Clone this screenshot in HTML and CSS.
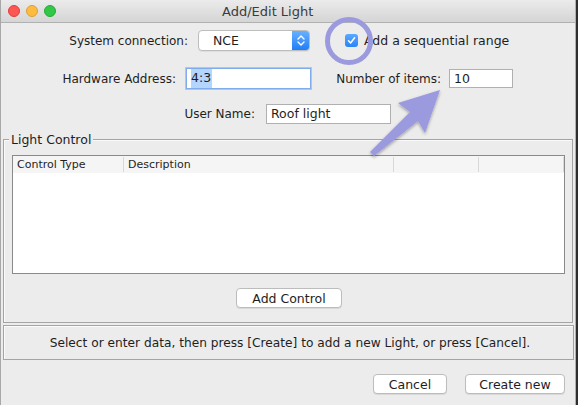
FILE: index.html
```html
<!DOCTYPE html>
<html>
<head>
<meta charset="utf-8">
<title>Add/Edit Light</title>
<link rel="stylesheet" href="styles.css">
</head>
<body>
<div class="window">
  <div class="titlebar">
    <div class="lights">
      <span class="dot red"></span><span class="dot yellow"></span><span class="dot green"></span>
    </div>
    <div class="title">Add/Edit Light</div>
  </div>
  <div class="content">
    <div class="row row1">
      <label class="lbl lbl-sys">System connection:</label>
      <div class="combo">
        <span class="combo-text">NCE</span>
        <span class="combo-btn">
          <svg width="18" height="21" viewBox="0 0 18 21"><path d="M6 9 L9 6 L12 9 M6 12 L9 15 L12 12" fill="none" stroke="#fff" stroke-width="1.4" stroke-linecap="round" stroke-linejoin="round"/></svg>
        </span>
      </div>
      <span class="check">
        <svg width="13" height="13" viewBox="0 0 13 13"><path d="M3.5 6.8 L5.6 9 L9.6 3.8" fill="none" stroke="#fff" stroke-width="1.5" stroke-linecap="round" stroke-linejoin="round"/></svg>
      </span>
      <span class="check-label">Add a sequential range</span>
    </div>
    <div class="row row2">
      <label class="lbl lbl-hw">Hardware Address:</label>
      <div class="field field-hw focused"><span class="sel">4:3</span></div>
      <label class="lbl lbl-num">Number of items:</label>
      <div class="field field-num">10</div>
    </div>
    <div class="row row3">
      <label class="lbl lbl-user">User Name:</label>
      <div class="field field-user">Roof light</div>
    </div>
    <div class="group">
      <div class="group-title">Light Control</div>
      <div class="table">
        <div class="thead">
          <div class="th th1">Control Type</div>
          <div class="th th2">Description</div>
          <div class="th th3"></div>
          <div class="th th4"></div>
        </div>
      </div>
      <div class="group-actions">
        <button class="btn btn-add">Add Control</button>
      </div>
    </div>
    <div class="message">Select or enter data, then press [Create] to add a new Light, or press [Cancel].</div>
    <div class="footer">
      <button class="btn btn-cancel">Cancel</button>
      <button class="btn btn-create">Create new</button>
    </div>
  </div>
  <svg class="overlay" width="578" height="405" viewBox="0 0 578 405">
    <defs>
      <filter id="sh" x="-20%" y="-20%" width="140%" height="140%">
        <feDropShadow dx="0" dy="1.5" stdDeviation="1.5" flood-color="#000" flood-opacity="0.35"/>
      </filter>
    </defs>
    <circle cx="349" cy="41" r="21.5" fill="none" stroke="#9c9ade" stroke-width="5"/>
    <polygon filter="url(#sh)" fill="#9c9ade" points="440,90 398,103 410,112 370,152 374,156 418,121 425,133"/>
  </svg>
</div>
</body>
</html>
```
FILE: styles.css
```css
* { box-sizing: border-box; }
html, body { margin: 0; padding: 0; }
body {
  background: #2e2e2e;
  width: 578px;
  height: 405px;
  overflow: hidden;
  font-family: "DejaVu Sans", "Liberation Sans", sans-serif;
  font-size: 12px;
  color: #1e1e1e;
}
.window {
  position: relative;
  width: 576px;
  height: 405px;
  background: #ececec;
  border-left: 1px solid #a8a8a8;
  border-right: 1px solid #b0b0b0;
  display: flex;
  flex-direction: column;
}
.titlebar {
  height: 23px;
  flex: none;
  display: flex;
  align-items: center;
  background: linear-gradient(#ebebeb, #d5d5d5);
  border-bottom: 1px solid #b1b1b1;
}
.lights { display: flex; gap: 6px; padding-left: 7px; }
.dot { width: 12px; height: 12px; border-radius: 50%; display: block; }
.red { background: #fc5753; border: 1px solid #df3e3a; }
.yellow { background: #fdbc40; border: 1px solid #de9f34; }
.green { background: #33c748; border: 1px solid #27aa35; }
.title {
  margin-left: 166px;
  font-size: 13px;
  color: #3b3b3b;
  padding-top: 1px;
}
.content { flex: 1; display: flex; flex-direction: column; }
.row { display: flex; align-items: center; }
.lbl { text-align: right; white-space: nowrap; flex: none; }
.row1 { margin-top: 7px; height: 21px; }
.lbl-sys { width: 187px; margin-right: 10px; }
.combo {
  width: 112px; height: 21px;
  display: flex;
  background: #fff;
  border: 1px solid #bdbdbd;
  border-radius: 4px;
  box-shadow: 0 1px 0 rgba(0,0,0,0.06);
  overflow: hidden;
}
.combo-text { flex: 1; padding-left: 14px; line-height: 19px; font-size: 12.5px; }
.combo-btn {
  width: 18px;
  background: linear-gradient(#6cb3ff, #1c7cf6);
  display: flex; align-items: center; justify-content: center;
  margin: -1px -1px -1px 0;
}
.check {
  width: 13px; height: 13px;
  margin-left: 35px;
  border-radius: 3px;
  background: linear-gradient(#5aa8ff, #2b83f6);
  display: flex;
}
.check-label { margin-left: 6px; font-size: 12.5px; }
.row2 { margin-top: 17px; height: 21px; }
.lbl-hw { width: 175px; margin-right: 10px; }
.field {
  background: #fff;
  border: 1px solid #b0b0b0;
  height: 20px;
  padding-left: 4px;
  line-height: 18px;
  font-size: 12.5px;
  white-space: nowrap;
}
.field-hw { width: 125px; height: 21px; }
.focused { border: 1px solid #80acec; box-shadow: 0 0 0 1px #a9c8f2; }
.sel { background: #b4d5fe; padding: 0 1px 1px 0; display: inline-block; line-height: 18px; }
.lbl-num { margin-left: 20px; width: 110px; margin-right: 8px; }
.field-num { width: 64px; height: 19px; }
.row3 { margin-top: 15px; height: 20px; }
.lbl-user { width: 254px; margin-right: 11px; }
.field-user { width: 125px; }
.group {
  margin: 15px 2px 0 2px;
  height: 184px;
  border: 1px solid #a4a4a4;
  box-shadow: inset 1px 1px 0 #fafafa;
  position: relative;
  padding: 15px 7px 0 8px;
  display: flex;
  flex-direction: column;
}
.group-title {
  position: absolute;
  top: -8px; left: 5px;
  background: #ececec;
  padding: 0 2px;
  font-size: 12.5px;
  line-height: 16px;
}
.table {
  height: 119px;
  background: #fff;
  border: 1px solid #8a8a8a;
}
.thead {
  display: flex;
  height: 17px;
  background: #f5f5f5;
  font-size: 11px;
  line-height: 16px;
}
.th { padding-left: 4px; border-right: 1px solid #d9d9d9; margin: 1px 0 1px; }
.th1 { width: 111px; }
.th2 { width: 270px; }
.th3 { width: 85px; }
.th4 { width: 85px; }
.group-actions { display: flex; justify-content: center; padding-top: 14px; padding-left: 1px; }
.btn {
  font-family: "DejaVu Sans", "Liberation Sans", sans-serif;
  font-size: 12.5px;
  color: #1e1e1e;
  background: #fff;
  border: 1px solid #bcbcbc;
  border-radius: 4px;
  box-shadow: 0 1px 0 rgba(0,0,0,0.08);
  height: 20px;
  padding: 0;
  line-height: 17px;
}
.btn-add { width: 106px; }
.message {
  margin: 2px 1px 0 2px;
  height: 35px;
  border: 1px solid #a4a4a4;
  box-shadow: inset 1px 1px 0 #fafafa;
  display: flex; align-items: center; justify-content: center;
  font-size: 12.2px;
  padding-left: 3px;
}
.footer {
  display: flex;
  justify-content: flex-end;
  gap: 18px;
  padding: 14px 10px 0 0;
}
.btn-cancel { width: 74px; }
.btn-create { width: 100px; }
.overlay { position: absolute; left: -1px; top: 0; pointer-events: none; }
```
